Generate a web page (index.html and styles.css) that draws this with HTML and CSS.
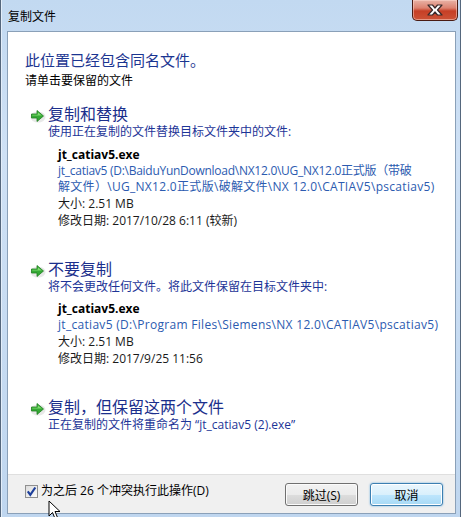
FILE: index.html
```html
<!DOCTYPE html>
<html lang="zh-CN">
<head>
<meta charset="utf-8">
<title>复制文件</title>
<link rel="stylesheet" href="styles.css">
</head>
<body>
<div class="window">
  <div class="titlebar">
    <span class="title">复制文件</span>
    <div class="close">
      <svg width="18" height="12" viewBox="0 0 18 12"><path d="M2 1 H6.5 L9 4 L11.5 1 H16 L11.5 6 L16 11 H11.5 L9 8 L6.5 11 H2 L6.5 6 Z" fill="#fff" stroke="#3b2a2a" stroke-width="1.2" stroke-linejoin="round"/></svg>
    </div>
  </div>
  <div class="panel">
    <div class="body">
      <div class="headline">此位置已经包含同名文件。</div>
      <div class="instr">请单击要保留的文件</div>

      <div class="option first">
        <svg class="arrow" width="16" height="14" viewBox="0 0 16 14"><ellipse cx="8" cy="8" rx="7.5" ry="5.5" fill="#d8d8d8" opacity="0.6"/><path d="M1.5 5 H7 V1.5 L13.5 7 L7 12.5 V9 H1.5 Z" fill="#35a935" stroke="#1f7d1f" stroke-width="0.8" stroke-linejoin="round"/><path d="M2.3 5.8 H7.8 V3.3 L11.8 6.6 H2.3 Z" fill="#7fdc6f"/></svg>
        <div class="opt-text">
          <div class="opt-title">复制和替换</div>
          <div class="opt-desc">使用正在复制的文件替换目标文件夹中的文件:</div>
          <div class="details">
            <div class="fname">jt_catiav5.exe</div>
            <div class="fpath"><span class="l1">jt_catiav5 (D:\BaiduYunDownload\NX12.0\UG_NX12.0正式版（带破</span><br>解文件）\UG_NX12.0正式版\破解文件\NX 12.0\CATIAV5\pscatiav5)</div>
            <div class="meta">大小: 2.51 MB</div>
            <div class="meta">修改日期: 2017/10/28 6:11 (较新)</div>
          </div>
        </div>
      </div>

      <div class="option">
        <svg class="arrow" width="16" height="14" viewBox="0 0 16 14"><ellipse cx="8" cy="8" rx="7.5" ry="5.5" fill="#d8d8d8" opacity="0.6"/><path d="M1.5 5 H7 V1.5 L13.5 7 L7 12.5 V9 H1.5 Z" fill="#35a935" stroke="#1f7d1f" stroke-width="0.8" stroke-linejoin="round"/><path d="M2.3 5.8 H7.8 V3.3 L11.8 6.6 H2.3 Z" fill="#7fdc6f"/></svg>
        <div class="opt-text">
          <div class="opt-title">不要复制</div>
          <div class="opt-desc">将不会更改任何文件。将此文件保留在目标文件夹中:</div>
          <div class="details">
            <div class="fname">jt_catiav5.exe</div>
            <div class="fpath">jt_catiav5 (D:\Program Files\Siemens\NX 12.0\CATIAV5\pscatiav5)</div>
            <div class="meta">大小: 2.51 MB</div>
            <div class="meta">修改日期: 2017/9/25 11:56</div>
          </div>
        </div>
      </div>

      <div class="option">
        <svg class="arrow" width="16" height="14" viewBox="0 0 16 14"><ellipse cx="8" cy="8" rx="7.5" ry="5.5" fill="#d8d8d8" opacity="0.6"/><path d="M1.5 5 H7 V1.5 L13.5 7 L7 12.5 V9 H1.5 Z" fill="#35a935" stroke="#1f7d1f" stroke-width="0.8" stroke-linejoin="round"/><path d="M2.3 5.8 H7.8 V3.3 L11.8 6.6 H2.3 Z" fill="#7fdc6f"/></svg>
        <div class="opt-text">
          <div class="opt-title">复制，但保留这两个文件</div>
          <div class="opt-desc">正在复制的文件将重命名为 “jt_catiav5 (2).exe”</div>
        </div>
      </div>
    </div>

    <div class="footer">
      <label class="check-row">
        <span class="checkbox"><svg width="11" height="11" viewBox="0 0 11 11"><path d="M1.8 5.3 L4.3 8.8 L9.3 1.5" fill="none" stroke="#1d3f9b" stroke-width="2.2"/></svg></span>
        <span class="check-label">为之后 26 个冲突执行此操作(D)</span>
      </label>
      <div class="buttons">
        <button class="btn">跳过(S)</button>
        <button class="btn default">取消</button>
      </div>
    </div>
  </div>

  <svg class="cursor" width="14" height="20" viewBox="0 0 14 20"><path d="M1 1 V16 L4.5 12.5 L7 18.5 L9.5 17.5 L7 11.5 H12 Z" fill="#fff" stroke="#000" stroke-width="1" stroke-linejoin="round"/></svg>
</div>
</body>
</html>
```

FILE: styles.css
```css
html, body {
  margin: 0;
  padding: 0;
  background: #bcd4ee;
}

body {
  font-family: "Open Sans", "Noto Sans CJK SC", sans-serif;
  color: #000;
}

.window {
  position: relative;
  width: 461px;
  height: 517px;
  overflow: hidden;
  display: flex;
  flex-direction: column;
  background: linear-gradient(180deg, #c2d9f1 0%, #cfe1f5 30%, #bfd6ef 100%);
  box-shadow: inset 1px 0 #55677d, inset 2px 0 #e3eefa, inset -1px 0 #55677d;
}

.titlebar {
  flex: none;
  height: 31px;
  box-sizing: border-box;
  display: flex;
  justify-content: space-between;
  align-items: flex-start;
  padding: 0 3px 0 8px;
}

.title {
  margin-top: 10px;
  font-size: 12px;
  line-height: 14px;
  color: #000;
}

.close {
  width: 46px;
  height: 21px;
  box-sizing: border-box;
  border: 1px solid #4a1c14;
  border-top: none;
  border-radius: 0 0 5px 5px;
  background: linear-gradient(180deg, #e8b3a6 0%, #dc8270 40%, #c63f26 55%, #cc5236 100%);
  box-shadow: inset 0 0 0 1px rgba(255, 220, 210, 0.5);
  display: flex;
  align-items: center;
  justify-content: center;
}

.panel {
  flex: 1;
  margin: 0 5px 3px 7px;
  border: 1px solid #8aa0b8;
  background: #fff;
  display: flex;
  flex-direction: column;
  min-height: 0;
}

.body {
  flex: 1;
  padding: 18px 12px 0 17px;
}

.headline {
  font-size: 15px;
  line-height: 20px;
  color: #1b3591;
}

.instr {
  margin-top: 3px;
  font-size: 12px;
  line-height: 16px;
  color: #000;
}

.option {
  display: grid;
  grid-template-columns: 23px 1fr;
  margin-top: 31px;
}

.option.first {
  margin-top: 16px;
}

.arrow {
  margin: 4px 0 0 5px;
}

.opt-title {
  font-size: 16px;
  line-height: 19px;
  color: #1b2f8c;
}

.opt-desc {
  font-size: 12px;
  line-height: 16px;
  color: #1d3597;
}

.details {
  margin: 7px 0 0 10px;
}

.option:not(.first) .details {
  margin-top: 6px;
}

.fname {
  font-size: 12px;
  line-height: 16px;
  font-weight: 700;
  color: #000;
}

.fpath {
  font-size: 12px;
  line-height: 16px;
  color: #2c5bb0;
  white-space: nowrap;
  letter-spacing: 0.3px;
}

.fpath .l1 {
  letter-spacing: -0.27px;
}

.meta {
  font-size: 12px;
  line-height: 17px;
  color: #1a1a1a;
}

.footer {
  flex: none;
  height: 39px;
  box-sizing: border-box;
  border-top: 1px solid #dfdfdf;
  background: #f0f0f0;
  display: flex;
  align-items: flex-start;
  padding: 8px 12px 0 17px;
}

.check-row {
  display: flex;
  align-items: flex-start;
  gap: 3px;
}

.checkbox {
  margin-top: 2px;
  width: 13px;
  height: 13px;
  box-sizing: border-box;
  border: 1px solid #8f8f8f;
  background: linear-gradient(135deg, #dcdcdc, #fbfbfb);
  display: flex;
  align-items: center;
  justify-content: center;
}

.check-label {
  font-size: 12px;
  line-height: 16px;
  color: #000;
}

.buttons {
  margin-left: auto;
  display: flex;
  gap: 12px;
}

.btn {
  width: 73px;
  height: 23px;
  box-sizing: border-box;
  padding: 0;
  font-family: "Open Sans", "Noto Sans CJK SC", sans-serif;
  font-size: 12px;
  color: #000;
  border: 1px solid #707070;
  border-radius: 3px;
  background: linear-gradient(180deg, #f2f2f2 0%, #ebebeb 50%, #dddddd 51%, #cfcfcf 100%);
  box-shadow: inset 0 0 0 1px #fbfbfb;
}

.btn.default {
  border-color: #3c7fb1;
  background: linear-gradient(180deg, #eaf6fd 0%, #d9f0fc 50%, #bee6fd 51%, #a7d9f5 100%);
  box-shadow: inset 0 0 0 1px #ffffff, 0 0 2px #5ea6db;
}

.cursor {
  position: absolute;
  left: 48px;
  top: 500px;
}
```
